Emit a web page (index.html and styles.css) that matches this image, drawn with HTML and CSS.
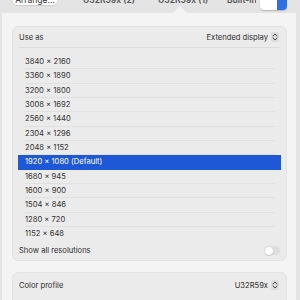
FILE: index.html
```html
<!DOCTYPE html>
<html>
<head>
<meta charset="utf-8">
<link rel="stylesheet" href="styles.css">
</head>
<body>
<div class="topbar">
  <div class="arrange">Arrange…</div>
  <div class="tab tab2">U32R59x (2)</div>
  <div class="tab tab1">U32R59x (1)</div>
  <div class="tab builtin">Built-in</div>
  <div class="seg"><span class="seg-r"></span></div>
</div>
<div class="popover">
  <span class="arrow"></span>
  <div class="card">
    <div class="row head">
      <span>Use as</span>
      <span class="value">Extended display <span class="stepper"><svg width="6" height="8" viewBox="0 0 6 8"><path d="M1 3 L3 1 L5 3 M1 5 L3 7 L5 5" fill="none" stroke="#444" stroke-width="1" stroke-linecap="round" stroke-linejoin="round"/></svg></span></span>
    </div>
    <div class="list">
      <div class="item">3840 × 2160</div>
      <div class="item">3360 × 1890</div>
      <div class="item">3200 × 1800</div>
      <div class="item">3008 × 1692</div>
      <div class="item">2560 × 1440</div>
      <div class="item">2304 × 1296</div>
      <div class="item">2048 × 1152</div>
      <div class="item selected">1920 × 1080 (Default)</div>
      <div class="item">1680 × 945</div>
      <div class="item">1600 × 900</div>
      <div class="item">1504 × 846</div>
      <div class="item">1280 × 720</div>
      <div class="item last">1152 × 648</div>
    </div>
    <div class="row showall">
      <span>Show all resolutions</span>
      <span class="toggle"><span class="knob"></span></span>
    </div>
  </div>
  <div class="card card2">
    <div class="row head2">
      <span>Color profile</span>
      <span class="value">U32R59x <span class="stepper"><svg width="6" height="8" viewBox="0 0 6 8"><path d="M1 3 L3 1 L5 3 M1 5 L3 7 L5 5" fill="none" stroke="#444" stroke-width="1" stroke-linecap="round" stroke-linejoin="round"/></svg></span></span>
    </div>
  </div>
</div>
</body>
</html>
```

FILE: styles.css
```css
html, body {
  margin: 0;
  padding: 0;
}
body {
  width: 300px;
  height: 300px;
  overflow: hidden;
  background: #e4e4e4;
  font-family: Inter, "Noto Sans", sans-serif;
  font-size: 7.6px;
  color: #2e2e2e;
}
.topbar {
  height: 13px;
  overflow: hidden;
  display: flex;
  align-items: flex-start;
  white-space: nowrap;
}
.arrange {
  flex: none;
  margin-left: 13px;
  width: 44px;
  height: 5px;
  background: #fff;
  border-radius: 0 0 4px 4px;
  box-shadow: 0 0.5px 1px rgba(0,0,0,0.2);
  font-size: 8.5px;
  line-height: 1px;
  text-align: center;
  color: #333;
}
.tab {
  flex: none;
  height: 4px;
  font-size: 8.5px;
  font-weight: 600;
  color: #555;
  line-height: 1px;
  text-align: center;
  white-space: nowrap;
}
.tab2 { margin-left: 26px; width: 47px; }
.tab1 { margin-left: 28px; width: 45px; }
.builtin { margin-left: 24px; width: 29px; text-align: left; overflow: hidden; }
.seg {
  flex: none;
  margin-left: 4px;
  width: 27px;
  height: 10px;
  background: #fff;
  border-radius: 0 0 4px 4px;
  box-shadow: 0 0.5px 1px rgba(0,0,0,0.2);
  display: flex;
  justify-content: flex-end;
  overflow: hidden;
}
.seg-r {
  width: 10px;
  height: 10px;
  background: #2f6fe4;
}
.popover {
  position: relative;
  margin-left: 2px;
  width: 294px;
  height: 287px;
  background: #f4f4f4;
  padding-top: 13px;
  box-sizing: border-box;
}
.arrow {
  position: absolute;
  left: 173px;
  top: -5px;
  width: 10px;
  height: 10px;
  background: #f4f4f4;
  transform: rotate(45deg);
}
.card {
  position: relative;
  margin: 0 9px 0 10px;
  background: #ebebeb;
  border: 1px solid #e3e3e3;
  border-radius: 6px;
  padding: 0 6px 0 6px;
}
.row {
  display: flex;
  justify-content: space-between;
  align-items: center;
}
.head {
  height: 20px;
  border-bottom: 1px solid #dcdcdc;
}
.value {
  display: flex;
  align-items: center;
  gap: 3px;
}
.stepper {
  width: 8px;
  height: 10px;
  background: #dcdcdc;
  border-radius: 2px;
  display: flex;
  align-items: center;
  justify-content: center;
  margin-right: 1px;
}
.list {
  margin: 7px -1px 0 -1px;
}
.item {
  height: 14.35px;
  line-height: 14.35px;
  padding-left: 7px;
  position: relative;
  color: #333;
}
.item::after {
  content: "";
  position: absolute;
  left: 7px;
  right: 6px;
  bottom: 0;
  height: 1px;
  background: #e0e0e0;
}
.item.last::after,
.item.selected::after {
  display: none;
}
.selected {
  background: #1f58d7;
  color: #fff;
}
.showall {
  height: 19px;
}
.toggle {
  width: 16px;
  height: 9px;
  border-radius: 5px;
  background: #dedede;
  display: flex;
  align-items: center;
  padding-left: 0.5px;
  box-sizing: border-box;
}
.knob {
  width: 8px;
  height: 8px;
  border-radius: 50%;
  background: #fff;
  box-shadow: 0 0.5px 1px rgba(0,0,0,0.25);
}
.card2 {
  margin-top: 11px;
  height: 40px;
}
.head2 {
  height: 24px;
}
```
